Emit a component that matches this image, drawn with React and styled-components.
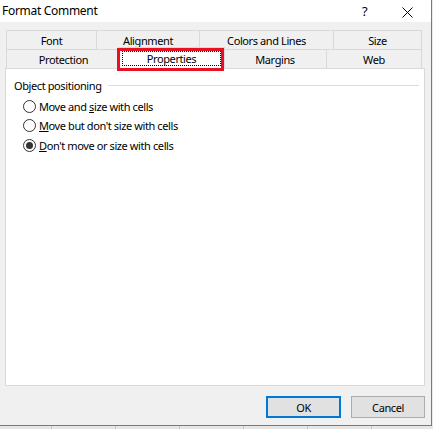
import styled, { createGlobalStyle } from "styled-components";

const GlobalStyle = createGlobalStyle`
  html, body {
    margin: 0;
    padding: 0;
    background: #e8e8e8;
  }
  body {
    font-family: "Noto Sans", "Liberation Sans", sans-serif;
    font-size: 11px;
    letter-spacing: -0.4px;
    color: #000;
  }
`;

const topTabs = [
  { label: "Font", width: 90 },
  { label: "Alignment", width: 103 },
  { label: "Colors and Lines", width: 134 },
  { label: "Size", width: 89 },
];

const bottomTabs = [
  { label: "Protection", width: 114 },
  { label: "Properties", width: 103, selected: true },
  { label: "Margins", width: 103 },
  { label: "Web", width: 96 },
];

const options = [
  { before: "Move and ", key: "s", after: "ize with cells" },
  { before: "", key: "M", after: "ove but don't size with cells" },
  { before: "", key: "D", after: "on't move or size with cells", checked: true },
];

function App() {
  return (
    <StPage>
      <GlobalStyle />
      <StDialog>
        <StTitleBar>
          <StTitle>Format Comment</StTitle>
          <StHelp>?</StHelp>
          <StClose>
            <svg width="11" height="11" viewBox="0 0 11 11">
              <path d="M0.5 0.5 L10.5 10.5 M10.5 0.5 L0.5 10.5" stroke="#000" strokeWidth="1" />
            </svg>
          </StClose>
        </StTitleBar>

        <StTabs>
          <StTabRow>
            {topTabs.map((t) => (
              <StTab key={t.label} $width={t.width}>
                {t.label}
              </StTab>
            ))}
          </StTabRow>
          <StTabRow>
            {bottomTabs.map((t) =>
              t.selected ? (
                <StActiveTab key={t.label} $width={t.width}>
                  <StFocus>{t.label}</StFocus>
                  <StHighlight />
                </StActiveTab>
              ) : (
                <StTab key={t.label} $width={t.width}>
                  {t.label}
                </StTab>
              )
            )}
          </StTabRow>
        </StTabs>

        <StPanel>
          <StGroupHeader>
            <span>Object positioning</span>
            <StGroupLine />
          </StGroupHeader>
          <StOptions>
            {options.map((o) => (
              <StOption key={o.after}>
                <StRadio $checked={o.checked} />
                <span>
                  {o.before}
                  <u>{o.key}</u>
                  {o.after}
                </span>
              </StOption>
            ))}
          </StOptions>
        </StPanel>

        <StButtons>
          <StButton $primary>OK</StButton>
          <StButton>Cancel</StButton>
        </StButtons>
      </StDialog>
      <StSheet>
        {[52, 64, 64, 64, 64, 64, 64].map((w, i) => (
          <StCell key={i} $width={w} />
        ))}
      </StSheet>
    </StPage>
  );
}

export default App;

const StPage = styled.div`
  width: 433px;
  height: 429px;
  overflow: hidden;
  background: #eaeaea;
`;

const StDialog = styled.div`
  width: 432px;
  height: 426px;
  box-sizing: border-box;
  border-right: 1px solid #7a7a7a;
  border-bottom: 1px solid #7a7a7a;
  background: #f0f0f0;
  display: flex;
  flex-direction: column;
`;

const StTitleBar = styled.div`
  height: 22px;
  background: #fff;
  display: flex;
  align-items: center;
  padding-left: 2px;
  font-size: 12px;
  letter-spacing: -0.3px;
`;

const StTitle = styled.div`
  flex: 1;
  margin-top: -2px;
`;

const StHelp = styled.div`
  width: 12px;
  font-size: 13px;
  margin-right: 28px;
  margin-top: -1px;
`;

const StClose = styled.div`
  display: flex;
  margin-right: 18px;
  margin-top: 2px;
`;

const StTabs = styled.div`
  margin: 8px 0 0 6px;
  display: flex;
  flex-direction: column;
`;

const StTabRow = styled.div`
  display: flex;
  height: 19px;
`;

const StTab = styled.div`
  width: ${(p) => p.$width}px;
  box-sizing: border-box;
  border-top: 1px solid #d9d9d9;
  border-left: 1px solid #d9d9d9;
  &:last-child {
    border-right: 1px solid #d9d9d9;
  }
  display: flex;
  align-items: center;
  justify-content: center;
  padding-top: 1px;
`;

const StActiveTab = styled.div`
  position: relative;
  z-index: 1;
  width: ${(p) => p.$width + 4}px;
  margin: -2px -2px -1px -2px;
  height: 22px;
  box-sizing: border-box;
  background: #fff;
  border: 1px solid #d9d9d9;
  border-bottom: none;
  display: flex;
  align-items: flex-start;
  justify-content: center;
  padding: 3px 3px 0;
`;

const StFocus = styled.div`
  flex: 1;
  height: 13px;
  border: 1px dotted #000;
  display: flex;
  align-items: center;
  justify-content: center;
`;

const StHighlight = styled.div`
  position: absolute;
  left: -2px;
  right: 0;
  top: 0;
  bottom: -2px;
  border: 3px solid #e81123;
`;

const StPanel = styled.div`
  margin-left: 5px;
  width: 420px;
  height: 318px;
  box-sizing: border-box;
  background: #fff;
  border: 1px solid #d9d9d9;
  padding: 9px 5px 0 8px;
`;

const StGroupHeader = styled.div`
  display: flex;
  align-items: center;
  gap: 6px;
  height: 14px;
`;

const StGroupLine = styled.div`
  flex: 1;
  height: 1px;
  background: #dcdcdc;
`;

const StOptions = styled.div`
  display: flex;
  flex-direction: column;
  gap: 5.5px;
  padding: 7px 0 0 9px;
`;

const StOption = styled.div`
  display: flex;
  align-items: center;
  gap: 3px;
  height: 14px;
`;

const StRadio = styled.div`
  width: 13px;
  height: 13px;
  box-sizing: border-box;
  border-radius: 50%;
  border: 1px solid #333;
  background: #fff;
  display: flex;
  align-items: center;
  justify-content: center;
  &::after {
    content: "";
    width: 7px;
    height: 7px;
    border-radius: 50%;
    background: ${(p) => (p.$checked ? "#333" : "transparent")};
  }
`;

const StButtons = styled.div`
  display: flex;
  justify-content: flex-end;
  gap: 10px;
  padding: 10px 6px 0 0;
`;

const StButton = styled.div`
  width: ${(p) => (p.$primary ? 75 : 74)}px;
  height: 22px;
  box-sizing: border-box;
  background: #e1e1e1;
  border: ${(p) => (p.$primary ? "2px solid #0078d7" : "1px solid #adadad")};
  display: flex;
  align-items: center;
  justify-content: center;
`;

const StSheet = styled.div`
  display: flex;
  height: 3px;
  background: #e6e6e6;
`;

const StCell = styled.div`
  width: ${(p) => p.$width}px;
  flex-shrink: 0;
  border-right: 1px solid #c6c6c6;
  box-sizing: border-box;
`;
